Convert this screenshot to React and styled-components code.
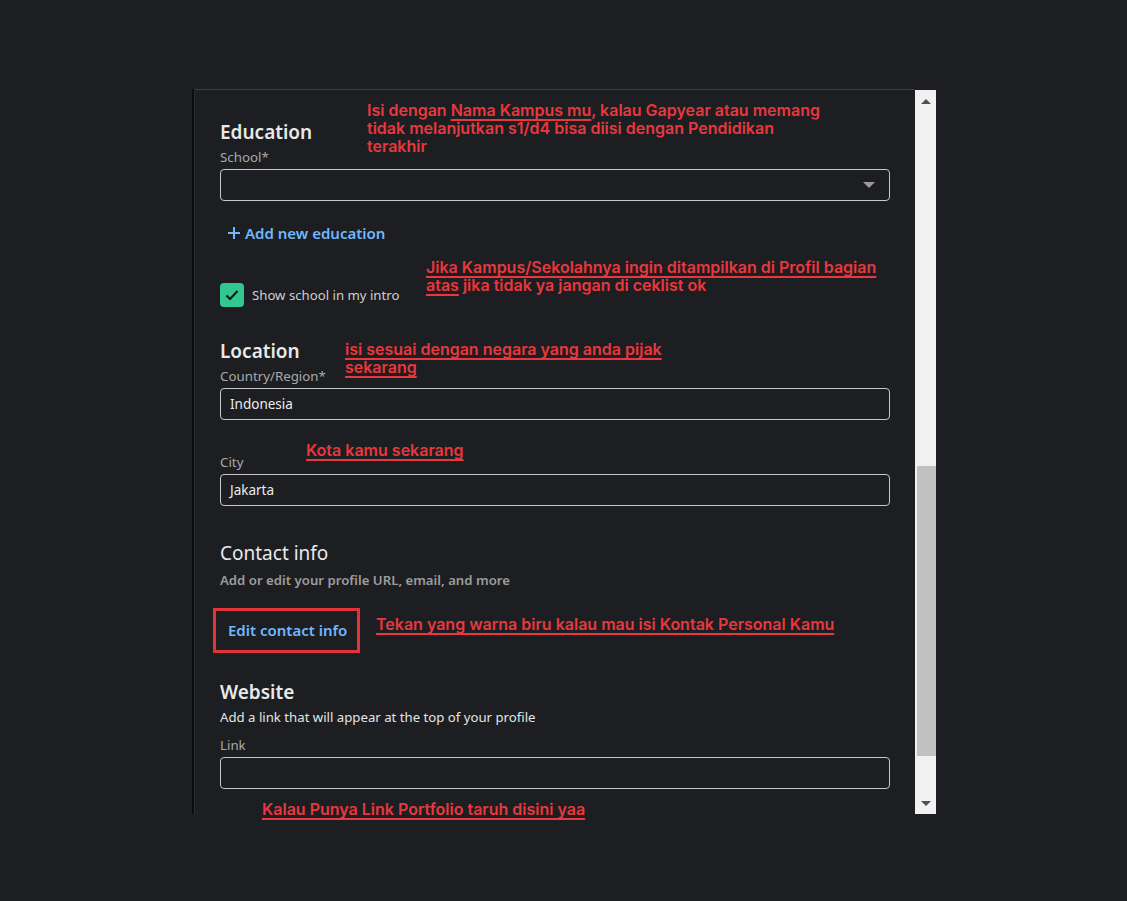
import React from "react";
import styled, { createGlobalStyle } from "styled-components";

const Global = createGlobalStyle`
  html, body { margin: 0; padding: 0; background: #1c1e22; }
  body { font-family: "Noto Sans", "Open Sans", sans-serif; }
  #root { min-height: 901px; }
`;

const Page = styled.div`
  height: 901px;
  padding: 89px 0 0 192px;
  box-sizing: border-box;
  background: #1c1e22;
`;

const Modal = styled.div`
  display: flex;
  width: 744px;
  height: 725px;
`;

const Underlay = styled.div`
  width: 3px;
  background: #0c0d0f;
  border-right: 1px solid #2a2c30;
  box-sizing: border-box;
`;

const Panel = styled.div`
  position: relative;
  width: 720px;
  border-top: 1px solid #3a3d42;
  background: #1c1e22;
  padding: 30px 25px 0 25px;
  box-sizing: border-box;
  display: flex;
  flex-direction: column;
`;

const Heading = styled.h2`
  margin: ${(p) => p.$mt || 0}px 0 0;
  font-size: 19px;
  line-height: 24px;
  font-weight: ${(p) => (p.$light ? 400 : 600)};
  color: #e9e9e9;
`;

const Label = styled.div`
  margin-top: ${(p) => p.$mt || 4}px;
  font-size: 13.3px;
  line-height: 18px;
  color: #a9a9a9;
`;

const Sub = styled.div`
  margin-top: ${(p) => p.$mt || 4}px;
  font-size: 13.2px;
  line-height: 18px;
  color: ${(p) => (p.$muted ? "#9c9c9c" : "#e4e4e4")};
  font-weight: ${(p) => (p.$muted ? 600 : 400)};
`;

const Input = styled.div`
  margin-top: 3px;
  height: 32px;
  border: 1px solid #c8c8c8;
  border-radius: 4px;
  box-sizing: border-box;
  display: flex;
  align-items: center;
  justify-content: space-between;
  padding: 0 14px 0 9px;
  font-size: 13.5px;
  color: #ececec;
`;

const Caret = styled.span`
  width: 0;
  height: 0;
  border-left: 6px solid transparent;
  border-right: 6px solid transparent;
  border-top: 6px solid #9a9a9a;
`;

const AddButton = styled.div`
  margin-top: 16px;
  height: 32px;
  display: flex;
  align-items: center;
  gap: 4px;
  padding-left: 7px;
  color: #71b7fb;
  font-size: 15px;
  font-weight: 600;
`;

const CheckRow = styled.div`
  margin-top: 34px;
  display: flex;
  align-items: center;
  gap: 8px;
  font-size: 13.2px;
  color: #cfcfcf;
`;

const CheckBox = styled.div`
  width: 24px;
  height: 24px;
  border-radius: 4px;
  background: #32c691;
  display: flex;
  align-items: center;
  justify-content: center;
`;

const EditBox = styled.div`
  margin: 19px 0 0 -7px;
  align-self: flex-start;
  height: 45px;
  border: 3px solid #e53238;
  box-sizing: border-box;
  display: flex;
  align-items: center;
  padding: 0 10px 1px 12px;
  color: #71b7fb;
  font-size: 15px;
  font-weight: 600;
`;

const Note = styled.div`
  position: absolute;
  left: ${(p) => p.$x}px;
  top: ${(p) => p.$y}px;
  font-family: Inter, "Noto Sans", sans-serif;
  font-weight: 600;
  font-size: 16px;
  line-height: 18px;
  color: #e8383d;
  white-space: nowrap;
`;

const U = styled.span`
  text-decoration: underline;
  text-decoration-thickness: 1.5px;
  text-underline-offset: 3px;
`;

const Scrollbar = styled.div`
  width: 21px;
  margin-top: 1px;
  background: #f1f1f1;
  display: flex;
  flex-direction: column;
  align-items: flex-end;
`;

const ArrowBtn = styled.div`
  width: 21px;
  height: 22px;
  display: flex;
  align-items: center;
  justify-content: center;
  flex: none;
`;

const Tri = styled.span`
  width: 0;
  height: 0;
  border-left: 5px solid transparent;
  border-right: 5px solid transparent;
  ${(p) =>
    p.$up
      ? "border-bottom: 5px solid #505050;"
      : "border-top: 5px solid #505050;"}
`;

const Track = styled.div`
  flex: 1;
  width: 19px;
  display: flex;
  flex-direction: column;
`;

const Thumb = styled.div`
  margin-top: 354px;
  height: 290px;
  background: #c1c1c1;
`;

export default function App() {
  return (
    <>
      <Global />
      <Page>
        <Modal>
          <Underlay />
          <Panel>
            <Heading>Education</Heading>
            <Label>School*</Label>
            <Input>
              <span />
              <Caret />
            </Input>
            <AddButton>
              <svg width="14" height="14" viewBox="0 0 14 14">
                <path d="M7 1v12M1 7h12" stroke="#71b7fb" strokeWidth="2" />
              </svg>
              Add new education
            </AddButton>
            <CheckRow>
              <CheckBox>
                <svg width="16" height="16" viewBox="0 0 16 16">
                  <path
                    d="M2.5 8.5l3.5 3.5 7.5-8"
                    stroke="#15171a"
                    strokeWidth="2"
                    fill="none"
                  />
                </svg>
              </CheckBox>
              Show school in my intro
            </CheckRow>

            <Heading $mt={32}>Location</Heading>
            <Label>Country/Region*</Label>
            <Input>Indonesia</Input>
            <Label $mt={33}>City</Label>
            <Input>Jakarta</Input>

            <Heading $mt={35} $light>
              Contact info
            </Heading>
            <Sub $mt={6} $muted>
              Add or edit your profile URL, email, and more
            </Sub>
            <EditBox>Edit contact info</EditBox>

            <Heading $mt={27}>Website</Heading>
            <Sub>Add a link that will appear at the top of your profile</Sub>
            <Label $mt={10}>Link</Label>
            <Input />

            <Note $x={172} $y={11}>
              Isi dengan <U>Nama Kampus mu</U>, kalau Gapyear atau memang
              <br />
              tidak melanjutkan s1/d4 bisa diisi dengan Pendidikan
              <br />
              terakhir
            </Note>
            <Note $x={231} $y={168}>
              <U>Jika Kampus/Sekolahnya ingin ditampilkan di Profil bagian</U>
              <br />
              <U>atas</U> jika tidak ya jangan di ceklist ok
            </Note>
            <Note $x={150} $y={250}>
              <U>isi sesuai dengan negara yang anda pijak</U>
              <br />
              <U>sekarang</U>
            </Note>
            <Note $x={111} $y={351}>
              <U>Kota kamu sekarang</U>
            </Note>
            <Note $x={181} $y={525}>
              <U>Tekan yang warna biru kalau mau isi Kontak Personal Kamu</U>
            </Note>
            <Note $x={67} $y={710}>
              <U>Kalau Punya Link Portfolio taruh disini yaa</U>
            </Note>
          </Panel>
          <Scrollbar>
            <ArrowBtn>
              <Tri $up />
            </ArrowBtn>
            <Track>
              <Thumb />
            </Track>
            <ArrowBtn>
              <Tri />
            </ArrowBtn>
          </Scrollbar>
        </Modal>
      </Page>
    </>
  );
}
